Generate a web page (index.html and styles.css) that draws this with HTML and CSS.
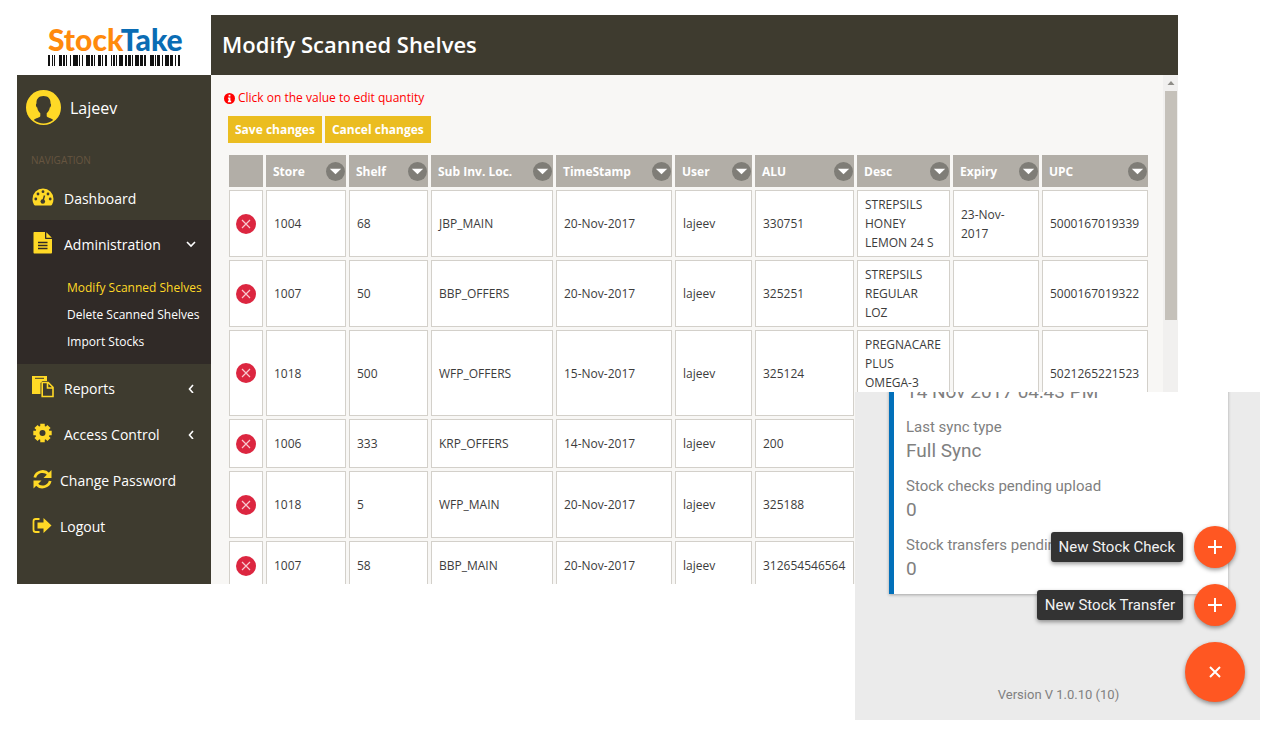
FILE: index.html
```html
<!DOCTYPE html>
<html lang="en">
<head>
<meta charset="utf-8">
<title>StockTake - Modify Scanned Shelves</title>
<link rel="stylesheet" href="styles.css">
</head>
<body>
<svg class="defs" aria-hidden="true">
  <symbol id="drop" viewBox="0 0 20 20"><circle cx="10" cy="10" r="10" fill="#7f7d77"/><path d="M4 7h12l-6 6z" fill="#fff"/></symbol>
  <symbol id="del" viewBox="0 0 20 20"><circle cx="10" cy="10" r="10" fill="#dc2640"/><path d="M6 6l8 8M14 6l-8 8" stroke="#f8c9cf" stroke-width="1.2" fill="none"/></symbol>
  <symbol id="plus" viewBox="0 0 16 16"><path d="M8 1v14M1 8h14" stroke="#fff" stroke-width="2" fill="none"/></symbol>
</svg>
<div class="stage">
  <div class="window">
    <aside class="sidebar">
      <div class="logo">
        <div class="logo-text"><span class="logo-a">Stock</span><span class="logo-b">Take</span></div>
        <svg class="barcode" viewBox="0 0 133 11" preserveAspectRatio="none" aria-hidden="true"><path d="M0 0h2v11h-2zM4 0h1v11h-1zM6 0h1v11h-1zM11 0h3v11h-3zM15 0h2v11h-2zM18 0h1v11h-1zM22 0h1v11h-1zM25 0h5v11h-5zM31 0h1v11h-1zM34 0h1v11h-1zM38 0h4v11h-4zM43 0h2v11h-2zM46 0h1v11h-1zM50 0h3v11h-3zM54 0h1v11h-1zM57 0h2v11h-2zM63 0h1v11h-1zM65 0h2v11h-2zM68 0h1v11h-1zM71 0h4v11h-4zM77 0h2v11h-2zM80 0h3v11h-3zM84 0h1v11h-1zM87 0h4v11h-4zM92 0h3v11h-3zM96 0h2v11h-2zM102 0h4v11h-4zM107 0h1v11h-1zM109 0h3v11h-3zM114 0h1v11h-1zM117 0h4v11h-4zM122 0h3v11h-3zM127 0h1v11h-1zM130 0h2v11h-2z" fill="#111"/></svg>
      </div>
      <div class="user">
        <svg width="35" height="35" viewBox="0 0 35 35" aria-hidden="true"><circle cx="17.500" cy="17.500" r="17.500" fill="#ffd926"/><path d="M17.500 6C12.500 6 10.300 9 10.500 13.500c-1 .5-.6 3.500.7 4 .4 3 1.800 4.600 3.100 5.800v3c-.8 1.500-4.500 1.800-6.500 3.700A15.500 15.500 0 0 0 27.200 30c-2-1.900-5.700-2.200-6.500-3.700v-3c1.300-1.200 2.700-2.800 3.100-5.800 1.300-.5 1.700-3.500.7-4C24.700 9 22.500 6 17.500 6z" fill="#3e3b2f"/></svg>
        <span>Lajeev</span>
      </div>
      <div class="nav-title">NAVIGATION</div>
      <ul class="nav">
        <li><a href="#"><svg class="ico" viewBox="0 0 22 20" aria-hidden="true"><path d="M11 1.500A10.500 10.500 0 0 0 .5 12c0 2 .5 4 1.500 5.700.3.500.7.800 1.200.8h15.600c.5 0 .9-.3 1.200-.8A11 11 0 0 0 21.500 12 10.500 10.500 0 0 0 11 1.500z" fill="#ffd926"/><g fill="#3e3b2f"><circle cx="3.800" cy="12" r="1.400"/><circle cx="6" cy="7" r="1.400"/><circle cx="11" cy="4.700" r="1.400"/><circle cx="16" cy="7" r="1.400"/><circle cx="18.200" cy="12" r="1.400"/><circle cx="10.800" cy="14.500" r="2.300"/></g><path d="M10.800 14.500L12.500 8.500" stroke="#3e3b2f" stroke-width="1.400"/></svg><span>Dashboard</span></a></li>
        <li class="open"><a href="#"><svg class="ico" viewBox="0 0 22 22" aria-hidden="true"><path d="M2.500 0H13v6c0 .6.400 1 1 1h6v13.500c0 .6-.5 1-1 1H2.500c-.6 0-1-.4-1-1V1c0-.6.400-1 1-1zM14.300 0.200L19.800 5.700H14.300z" fill="#ffd926"/><path d="M6 10.500h9.500M6 13.500h9.500M6 16.500h9.500" stroke="#302a27" stroke-width="1.300"/></svg><span>Administration</span><svg class="chev" viewBox="0 0 12 12" aria-hidden="true"><path d="M2 5l4 4 4-4" fill="none" stroke="#fff" stroke-width="1.600"/></svg></a>
          <ul class="sub">
            <li><a class="current" href="#">Modify Scanned Shelves</a></li>
            <li><a href="#">Delete Scanned Shelves</a></li>
            <li><a href="#">Import Stocks</a></li>
          </ul>
        </li>
        <li><a href="#"><svg class="ico" viewBox="0 0 22 22" aria-hidden="true"><path d="M0 0H15V5H10.500L8.500 7V18H0z" fill="#ffd926"/><path d="M3 2.300h9" stroke="#3e3b2f" stroke-width="1"/><path d="M10.200 6.500h6l4.800 4.800V20.500H10.200zM15.500 6.500v5.500H21" fill="none" stroke="#ffd926" stroke-width="1.600"/></svg><span>Reports</span><svg class="chev" viewBox="0 0 12 12" aria-hidden="true"><path d="M8 4L4.500 8 8 12" fill="none" stroke="#fff" stroke-width="1.600"/></svg></a></li>
        <li><a href="#"><svg class="ico" viewBox="0 0 22 22" aria-hidden="true"><g transform="translate(10.500 11)"><g stroke="#ffd926" stroke-width="4.500"><path d="M0-9.200V9.200M-9.200 0H9.200M-6.500-6.500L6.500 6.500M6.500-6.500L-6.500 6.500"/></g><circle r="7.200" fill="#ffd926"/><circle r="3" fill="#3e3b2f"/></g></svg><span>Access Control</span><svg class="chev" viewBox="0 0 12 12" aria-hidden="true"><path d="M8 4L4.500 8 8 12" fill="none" stroke="#fff" stroke-width="1.600"/></svg></a></li>
        <li class="tight"><a href="#"><svg class="ico" viewBox="0 0 22 22" aria-hidden="true"><g transform="translate(0 1)"><path d="M2.800 8.500A8 8 0 0 1 16.500 5.200M18.200 12A8 8 0 0 1 4.500 15.300" fill="none" stroke="#ffd926" stroke-width="2.800"/><path d="M19.500 1v8h-8zM1.500 19.500v-8h8z" fill="#ffd926"/></g></svg><span>Change Password</span></a></li>
        <li class="tight"><a href="#"><svg class="ico" viewBox="0 0 22 22" aria-hidden="true"><g transform="translate(0 2)"><path d="M7.500 3H3.800C2.500 3 1.500 4 1.500 5.300v8.400C1.500 15 2.500 16 3.800 16h3.700" fill="none" stroke="#ffd926" stroke-width="1.800"/><path d="M5.500 6.500h6V2l8 7.500-8 7.500v-4.500h-6z" fill="#ffd926"/></g></svg><span>Logout</span></a></li>
      </ul>
    </aside>
    <main class="main">
      <header class="title"><h1>Modify Scanned Shelves</h1></header>
      <div class="body">
        <div class="content">
          <p class="hint"><svg width="11" height="11" viewBox="0 0 12 12" aria-hidden="true"><circle cx="6" cy="6" r="6" fill="#f00"/><path d="M5 2h2v1.700H5zM4.300 4.800H7v3.700h.8V10H4.300V8.500H5V6.200h-.7z" fill="#fff"/></svg><span>Click on the value to edit quantity</span></p>
          <div class="actions"><button type="button">Save changes</button><button type="button">Cancel changes</button></div>
          <table>
            <colgroup><col class="w-del"><col class="w-store"><col class="w-shelf"><col class="w-loc"><col class="w-time"><col class="w-user"><col class="w-alu"><col class="w-desc"><col class="w-exp"><col class="w-upc"></colgroup>
            <thead><tr>
              <th></th>
              <th><div class="th">Store<button type="button" aria-label="Filter store"><svg><use href="#drop"/></svg></button></div></th>
              <th><div class="th">Shelf<button type="button" aria-label="Filter shelf"><svg><use href="#drop"/></svg></button></div></th>
              <th><div class="th">Sub Inv. Loc.<button type="button" aria-label="Filter location"><svg><use href="#drop"/></svg></button></div></th>
              <th><div class="th">TimeStamp<button type="button" aria-label="Filter time"><svg><use href="#drop"/></svg></button></div></th>
              <th><div class="th">User<button type="button" aria-label="Filter user"><svg><use href="#drop"/></svg></button></div></th>
              <th><div class="th">ALU<button type="button" aria-label="Filter ALU"><svg><use href="#drop"/></svg></button></div></th>
              <th><div class="th">Desc<button type="button" aria-label="Filter description"><svg><use href="#drop"/></svg></button></div></th>
              <th><div class="th">Expiry<button type="button" aria-label="Filter expiry"><svg><use href="#drop"/></svg></button></div></th>
              <th><div class="th">UPC<button type="button" aria-label="Filter UPC"><svg><use href="#drop"/></svg></button></div></th>
            </tr></thead>
            <tbody>
              <tr class="lines-3"><td><button class="del" type="button" aria-label="Delete row"><svg><use href="#del"/></svg></button></td><td>1004</td><td>68</td><td>JBP_MAIN</td><td>20-Nov-2017</td><td>lajeev</td><td>330751</td><td>STREPSILS HONEY LEMON 24 S</td><td>23-Nov-<br>2017</td><td>5000167019339</td></tr>
              <tr class="lines-3"><td><button class="del" type="button" aria-label="Delete row"><svg><use href="#del"/></svg></button></td><td>1007</td><td>50</td><td>BBP_OFFERS</td><td>20-Nov-2017</td><td>lajeev</td><td>325251</td><td>STREPSILS REGULAR<br>LOZ</td><td></td><td>5000167019322</td></tr>
              <tr class="lines-4"><td><button class="del" type="button" aria-label="Delete row"><svg><use href="#del"/></svg></button></td><td>1018</td><td>500</td><td>WFP_OFFERS</td><td>15-Nov-2017</td><td>lajeev</td><td>325124</td><td class="top">PREGNACARE PLUS<br>OMEGA-3</td><td></td><td>5021265221523</td></tr>
              <tr class="lines-2"><td><button class="del" type="button" aria-label="Delete row"><svg><use href="#del"/></svg></button></td><td>1006</td><td>333</td><td>KRP_OFFERS</td><td>14-Nov-2017</td><td>lajeev</td><td>200</td><td></td><td></td><td></td></tr>
              <tr class="lines-3"><td><button class="del" type="button" aria-label="Delete row"><svg><use href="#del"/></svg></button></td><td>1018</td><td>5</td><td>WFP_MAIN</td><td>20-Nov-2017</td><td>lajeev</td><td>325188</td><td></td><td></td><td></td></tr>
              <tr class="lines-2"><td><button class="del" type="button" aria-label="Delete row"><svg><use href="#del"/></svg></button></td><td>1007</td><td>58</td><td>BBP_MAIN</td><td>20-Nov-2017</td><td>lajeev</td><td>312654546564</td><td></td><td></td><td></td></tr>
            </tbody>
          </table>
        </div>
        <div class="scrollbar" aria-hidden="true"><svg width="15" height="16" viewBox="0 0 15 16"><path d="M4.500 10h7L8 6z" fill="#8f8d88"/></svg><div class="thumb"></div></div>
      </div>
    </main>
  </div>
  <section class="phone">
    <div class="card">
      <dl>
        <dd>14 Nov 2017 04:43 PM</dd>
        <dt>Last sync type</dt><dd>Full Sync</dd>
        <dt>Stock checks pending upload</dt><dd>0</dd>
        <dt>Stock transfers pending</dt><dd>0</dd>
      </dl>
    </div>
    <div class="version">Version V 1.0.10 (10)</div>
    <div class="fabs">
      <div class="fab-row"><span class="tip" id="t1">New Stock Check</span><button class="fab" type="button" aria-labelledby="t1"><svg><use href="#plus"/></svg></button></div>
      <div class="fab-row"><span class="tip" id="t2">New Stock Transfer</span><button class="fab" type="button" aria-labelledby="t2"><svg><use href="#plus"/></svg></button></div>
      <button class="fab big" type="button" aria-label="Close"><svg viewBox="0 0 12 12"><path d="M1 1l10 10M11 1L1 11" stroke="#fff" stroke-width="2"/></svg></button>
    </div>
  </section>
</div>
</body>
</html>
```
FILE: styles.css
```css
* { box-sizing: border-box; }
body { margin: 0; background: #fff; font-family: "Open Sans", "Noto Sans", sans-serif; font-size: 12px; color: #3c3c3c; }
.defs { position: absolute; width: 0; height: 0; }
ul { list-style: none; margin: 0; padding: 0; }
a { color: inherit; text-decoration: none; }
button { border: 0; padding: 0; font: inherit; cursor: pointer; }

.stage { position: relative; display: flex; height: 100vh; padding: 15px 99px 154px 17px; overflow: hidden; }
.window { flex: 1; display: flex; min-width: 0; overflow: hidden; }

.sidebar { flex: 0 0 194px; min-width: 0; background: #3e3b2f; color: #fff; }
.logo { height: 60px; padding: 8px 30px 0 31px; background: #fff; }
.logo-text { font-family: Lato, sans-serif; font-weight: 900; font-size: 30px; line-height: 32px; white-space: nowrap; }
.logo-a { color: #ff8a0c; }
.logo-b { color: #0a6cb4; }
.barcode { display: block; width: 100%; height: 11px; }
.user { display: flex; align-items: center; gap: 9px; padding: 14px 9px 0; font-size: 16px; line-height: 35px; }
.user span { padding-top: 2px; }
.nav-title { padding: 26px 14px 0; font-size: 10px; line-height: 16px; height: 48px; color: #665540; }
.nav > li > a { display: flex; align-items: center; height: 46px; padding: 0 14px 0 15px; font-size: 14px; }
.nav span { flex: 1; padding-left: 10px; padding-top: 3px; white-space: nowrap; }
.nav .tight span { padding-left: 6px; }
.ico { width: 22px; height: 22px; }
.chev { width: 12px; height: 12px; }
.open { background: #302a27; }
.sub { padding: 8px 0 9px 50px; font-size: 12px; line-height: 27px; white-space: nowrap; }
.sub .current { color: #ffd926; }

.main { flex: 1; display: flex; flex-direction: column; min-width: 0; }
.title { flex: 0 0 60px; display: flex; align-items: center; padding: 0 11px 2px; background: #3e3b2f; color: #fff; }
h1 { margin: 0; font-size: 22px; font-weight: 600; line-height: 30px; }
.body { flex: 1; display: flex; min-height: 0; background: #f8f7f5; }
.content { flex: 1; min-width: 0; overflow: hidden; padding: 13px 12px 0 15px; }
.hint { display: flex; align-items: center; gap: 3px; margin: 0 0 8px -2px; color: #f00; line-height: 20px; }
.actions { display: flex; gap: 3px; padding-left: 2px; margin-bottom: 9px; }
.actions button { height: 27px; padding: 0 7px; background: #ebbd20; color: #fff; font-weight: 700; }

table { width: 100%; table-layout: fixed; border-collapse: separate; border-spacing: 3px; line-height: 19px; }
.w-del { width: 34px; } .w-store { width: 80px; } .w-shelf { width: 79px; } .w-loc { width: 122px; } .w-time { width: 116px; }
.w-user { width: 77px; } .w-alu { width: 99px; } .w-desc { width: 93px; } .w-exp { width: 86px; } .w-upc { width: 106px; }
th { height: 32px; padding: 0 1px 0 7px; background: #b2aea7; color: #fff; text-align: left; font-weight: 700; }
.th { display: flex; align-items: center; justify-content: space-between; white-space: nowrap; }
.th button { display: flex; background: none; }
.th svg { width: 19px; height: 19px; }
td { padding: 4px 6px 4px 7px; border: 1px solid #d3d0ca; background: #fff; vertical-align: middle; }
td:first-child { padding: 4px 6px; }
td.top { vertical-align: top; }
.lines-3 td { height: 67px; }
.lines-4 td { height: 86px; }
.lines-2 td { height: 49px; }
.del { display: flex; background: none; }
.del svg { width: 20px; height: 20px; }

.scrollbar { flex: 0 0 15px; background: #f1f0ef; }
.scrollbar svg { display: block; }
.thumb { height: 45%; margin: 0 1px 0 2px; background: #c5c1ba; }

.phone { position: absolute; right: 17px; bottom: 18px; width: 405px; height: 328px; padding: 0 32px 0 34px; display: flex; flex-direction: column; justify-content: flex-end; overflow: hidden; background: #ebebeb; color: #808080; font-family: Roboto, sans-serif; }
.card { padding: 0 12px 13px; border-left: 5px solid #0270ba; background: #fff; box-shadow: 0 1px 3px rgba(0, 0, 0, .3); }
dl, dt, dd { margin: 0; }
dt { padding-top: 12px; font-size: 15px; line-height: 23px; }
dd { font-size: 19px; line-height: 24px; }
.version { margin: 91px 0 15px; text-align: center; font-size: 13px; line-height: 20px; }
.fabs { position: absolute; right: 15px; bottom: 18px; display: flex; flex-direction: column; align-items: flex-end; gap: 16px; }
.fab-row { display: flex; align-items: center; gap: 11px; padding-right: 9px; }
.tip { padding: 0 8px; border-radius: 3px; background: #333; color: #f2f2f2; font-size: 15px; line-height: 30px; box-shadow: 0 2px 4px rgba(0, 0, 0, .4); }
.fab { display: flex; align-items: center; justify-content: center; width: 42px; height: 42px; border-radius: 50%; background: #ff5722; box-shadow: 0 2px 4px rgba(0, 0, 0, .4); }
.fab svg { width: 16px; height: 16px; }
.big { width: 60px; height: 60px; }
.big svg { width: 12px; height: 12px; }
```
